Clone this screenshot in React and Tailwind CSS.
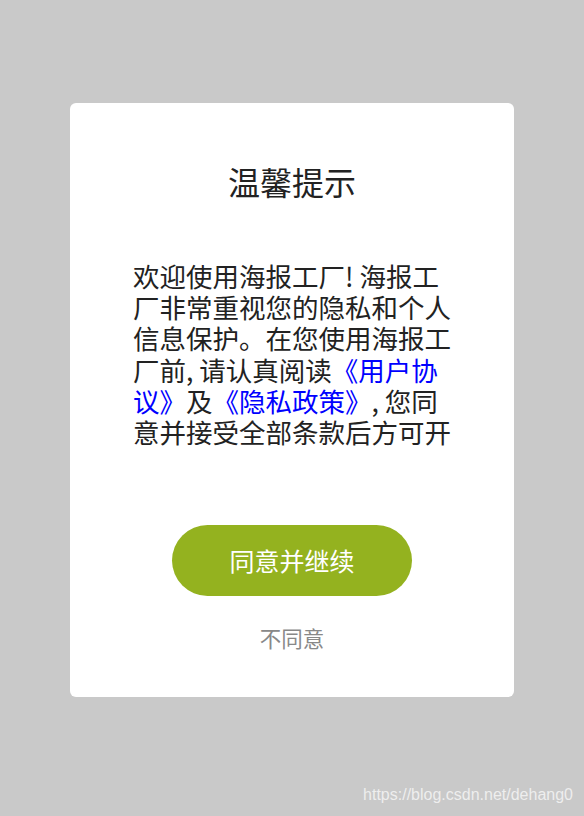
import React from "react";

const cjk = { fontFamily: '"Noto Sans CJK SC", "Noto Sans", sans-serif' };

export default function App() {
  const lines = [
    <>欢迎使用海报工厂! 海报工</>,
    <>厂非常重视您的隐私和个人</>,
    <>信息保护。在您使用海报工</>,
    <>
      厂前, 请认真阅读<span className="text-[#0000ff]">《用户协</span>
    </>,
    <>
      <span className="text-[#0000ff]">议》</span>及<span className="text-[#0000ff]">《隐私政策》</span>, 您同
    </>,
    <>意并接受全部条款后方可开</>,
  ];

  return (
    <div className="relative min-h-[816px] w-full bg-[#c9c9c9] pt-[103px]" style={cjk}>
      {/* 弹窗 */}
      <div className="mx-auto flex h-[594px] w-[444px] flex-col items-center rounded-[6px] bg-white pt-[59px]">
        <h2 className="text-[32px] leading-[38px] font-normal text-[#222]">温馨提示</h2>

        <div className="mt-[60px] ml-[63px] w-[350px] self-start text-[26.5px] leading-[31.2px] text-[#222]">
          {lines.map((l, i) => (
            <div key={i} className="whitespace-nowrap">
              {l}
            </div>
          ))}
        </div>

        <button className="mt-[78px] flex h-[71px] w-[240px] items-center justify-center rounded-full bg-[#94b21f] text-[25px] text-white">
          同意并继续
        </button>

        <div className="mt-[28px] text-[21.5px] leading-[28px] text-[#888]">不同意</div>
      </div>

      {/* 水印 */}
      <div
        className="absolute right-[11px] bottom-[9px] text-[16px] text-white/70"
        style={{ fontFamily: '"Liberation Sans", Arial, sans-serif' }}
      >
        https://blog.csdn.net/dehang0
      </div>
    </div>
  );
}
